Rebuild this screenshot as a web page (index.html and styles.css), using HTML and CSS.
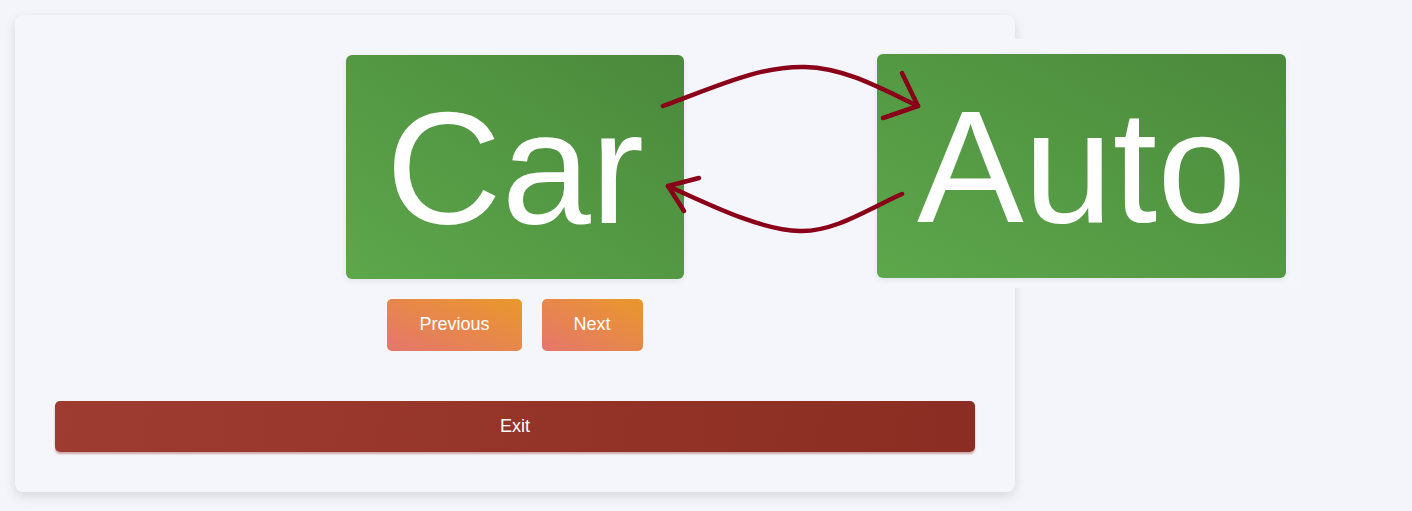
FILE: index.html
```html
<!DOCTYPE html>
<html>
<head>
<meta charset="utf-8">
<link rel="stylesheet" href="styles.css">
</head>
<body>
<div class="panel">
  <div class="word-row">
    <div class="word-card">Car</div>
  </div>
  <div class="nav-row">
    <button class="nav-btn">Previous</button>
    <button class="nav-btn">Next</button>
  </div>
  <button class="exit-btn">Exit</button>
</div>
<div class="translation">
  <div class="word-card">Auto</div>
</div>
<svg class="arrows" width="1412" height="511" viewBox="0 0 1412 511">
  <path d="M663,106 C720,85 760,66 805,67 C845,68 880,88 918,106"/>
  <path d="M902,73 L918,106 L883,118"/>
  <path d="M902,194 C870,208 835,232 800,231 C760,230 710,205 668,186"/>
  <path d="M699,178 L668,186 L684,211"/>
</svg>
</body>
</html>
```

FILE: styles.css
```css
html, body {
  margin: 0;
  background: #f4f5fa;
}
body {
  padding: 15px;
  font-family: "Liberation Sans", Arial, sans-serif;
  position: relative;
  min-height: 511px;
  box-sizing: border-box;
}
.panel {
  width: 1000px;
  box-sizing: border-box;
  padding: 40px;
  background: #f5f6fb;
  border-radius: 8px;
  box-shadow: 0 4px 12px rgba(0, 0, 0, 0.12);
  display: flex;
  flex-direction: column;
}
.word-row {
  display: flex;
  justify-content: center;
}
.word-card {
  padding: 21px 40px 19px;
  font-size: 160px;
  color: #fff;
  background: linear-gradient(to top right, #5da74b, #4a893b);
  border-radius: 6px;
  box-shadow: 0 2px 6px rgba(0, 0, 0, 0.08);
}
.nav-row {
  display: flex;
  justify-content: center;
  gap: 20px;
  margin-top: 20px;
}
.nav-btn {
  font-family: "Liberation Sans", Arial, sans-serif;
  font-size: 18px;
  color: #fff;
  border: none;
  padding: 15px 32px 16px;
  border-radius: 5px;
  background: linear-gradient(to top right, #e5766d, #e9982a);
}
.exit-btn {
  margin-top: 50px;
  font-family: "Liberation Sans", Arial, sans-serif;
  font-size: 18px;
  color: #fff;
  border: none;
  padding: 15px;
  border-radius: 5px;
  background: linear-gradient(100deg, #9f3c31, #8b2d22);
  box-shadow: 0 2px 2px rgba(120, 30, 20, 0.35);
}
.translation {
  position: absolute;
  left: 862px;
  top: 39px;
  padding: 15px 15px 10px;
  background: #f5f6fb;
  display: flex;
}
.arrows {
  position: absolute;
  left: 0;
  top: 0;
  pointer-events: none;
  fill: none;
  stroke: #8a0018;
  stroke-width: 4.5;
  stroke-linecap: round;
  stroke-linejoin: round;
}
```
